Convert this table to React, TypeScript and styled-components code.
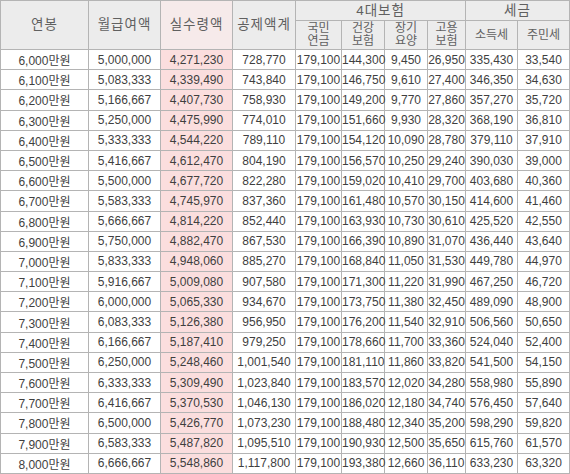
import React from "react";
import styled, { createGlobalStyle } from "styled-components";

const Global = createGlobalStyle`
  html, body { margin: 0; padding: 0; background: #ffffff; }
  body { font-family: "Liberation Sans", "Noto Sans CJK KR", sans-serif; }
`;

const Table = styled.table`
  border-collapse: collapse;
  table-layout: fixed;
  width: 569px;
  font-family: "Liberation Sans", "Noto Sans CJK KR", sans-serif;
  color: #3f3f3f;
`;

const HeadCell = styled.th<{ $pink?: boolean; $h?: number }>`
  border: 1px solid #b4b4b4;
  background: ${(p) => (p.$pink ? "#f6eaea" : "#ececec")};
  font-weight: normal;
  font-size: 13.5px;
  letter-spacing: 1px;
  color: #606060;
  height: ${(p) => p.$h ?? 19}px;
  padding: 0;
  text-align: center;
  line-height: 14px;
`;

const SubHeadCell = styled(HeadCell)`
  font-size: 12px;
  letter-spacing: 0;
  line-height: 13px;
`;

const Cell = styled.td<{ $pink?: boolean }>`
  border: 1px solid #b4b4b4;
  background: ${(p) => (p.$pink ? "#fbdede" : "#ffffff")};
  font-size: 12px;
  height: 19.2px;
  padding: 0;
  text-align: center;
  white-space: nowrap;
`;

const widths = [88, 72, 72, 63, 46, 43, 43, 38, 52, 52];

const rows: string[][] = [
  ["6,000", "5,000,000", "4,271,230", "728,770", "179,100", "144,300", "9,450", "26,950", "335,430", "33,540"],
  ["6,100", "5,083,333", "4,339,490", "743,840", "179,100", "146,750", "9,610", "27,400", "346,350", "34,630"],
  ["6,200", "5,166,667", "4,407,730", "758,930", "179,100", "149,200", "9,770", "27,860", "357,270", "35,720"],
  ["6,300", "5,250,000", "4,475,990", "774,010", "179,100", "151,660", "9,930", "28,320", "368,190", "36,810"],
  ["6,400", "5,333,333", "4,544,220", "789,110", "179,100", "154,120", "10,090", "28,780", "379,110", "37,910"],
  ["6,500", "5,416,667", "4,612,470", "804,190", "179,100", "156,570", "10,250", "29,240", "390,030", "39,000"],
  ["6,600", "5,500,000", "4,677,720", "822,280", "179,100", "159,020", "10,410", "29,700", "403,680", "40,360"],
  ["6,700", "5,583,333", "4,745,970", "837,360", "179,100", "161,480", "10,570", "30,150", "414,600", "41,460"],
  ["6,800", "5,666,667", "4,814,220", "852,440", "179,100", "163,930", "10,730", "30,610", "425,520", "42,550"],
  ["6,900", "5,750,000", "4,882,470", "867,530", "179,100", "166,390", "10,890", "31,070", "436,440", "43,640"],
  ["7,000", "5,833,333", "4,948,060", "885,270", "179,100", "168,840", "11,050", "31,530", "449,780", "44,970"],
  ["7,100", "5,916,667", "5,009,080", "907,580", "179,100", "171,300", "11,220", "31,990", "467,250", "46,720"],
  ["7,200", "6,000,000", "5,065,330", "934,670", "179,100", "173,750", "11,380", "32,450", "489,090", "48,900"],
  ["7,300", "6,083,333", "5,126,380", "956,950", "179,100", "176,200", "11,540", "32,910", "506,560", "50,650"],
  ["7,400", "6,166,667", "5,187,410", "979,250", "179,100", "178,660", "11,700", "33,360", "524,040", "52,400"],
  ["7,500", "6,250,000", "5,248,460", "1,001,540", "179,100", "181,110", "11,860", "33,820", "541,500", "54,150"],
  ["7,600", "6,333,333", "5,309,490", "1,023,840", "179,100", "183,570", "12,020", "34,280", "558,980", "55,890"],
  ["7,700", "6,416,667", "5,370,530", "1,046,130", "179,100", "186,020", "12,180", "34,740", "576,450", "57,640"],
  ["7,800", "6,500,000", "5,426,770", "1,073,230", "179,100", "188,480", "12,340", "35,200", "598,290", "59,820"],
  ["7,900", "6,583,333", "5,487,820", "1,095,510", "179,100", "190,930", "12,500", "35,650", "615,760", "61,570"],
  ["8,000", "6,666,667", "5,548,860", "1,117,800", "179,100", "193,380", "12,660", "36,110", "633,230", "63,320"],
];

export default function App() {
  return (
    <>
      <Global />
      <Table>
        <colgroup>
          {widths.map((w, i) => (
            <col key={i} style={{ width: w }} />
          ))}
        </colgroup>
        <thead>
          <tr>
            <HeadCell rowSpan={2}>연봉</HeadCell>
            <HeadCell rowSpan={2}>월급여액</HeadCell>
            <HeadCell rowSpan={2} $pink>실수령액</HeadCell>
            <HeadCell rowSpan={2}>공제액계</HeadCell>
            <HeadCell colSpan={4} $h={19}>4대보험</HeadCell>
            <HeadCell colSpan={2} $h={19}>세금</HeadCell>
          </tr>
          <tr>
            <SubHeadCell $h={28}>국민<br />연금</SubHeadCell>
            <SubHeadCell $h={28}>건강<br />보험</SubHeadCell>
            <SubHeadCell $h={28}>장기<br />요양</SubHeadCell>
            <SubHeadCell $h={28}>고용<br />보험</SubHeadCell>
            <SubHeadCell $h={28}>소득세</SubHeadCell>
            <SubHeadCell $h={28}>주민세</SubHeadCell>
          </tr>
        </thead>
        <tbody>
          {rows.map((r) => (
            <tr key={r[0]}>
              <Cell>{r[0]}만원</Cell>
              {r.slice(1).map((v, i) => (
                <Cell key={i} $pink={i === 1}>
                  {v}
                </Cell>
              ))}
            </tr>
          ))}
        </tbody>
      </Table>
    </>
  );
}
